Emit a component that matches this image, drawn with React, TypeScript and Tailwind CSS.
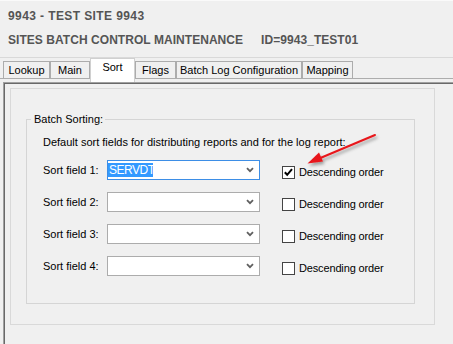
import React from "react";

const font = { fontFamily: '"Liberation Sans", Arial, sans-serif' };

function Chevron() {
  return (
    <svg width="8" height="6" viewBox="0 0 8 6" className="block">
      <path d="M1 1.2 L4 4.2 L7 1.2" fill="none" stroke="#606060" strokeWidth="1.8" />
    </svg>
  );
}

function Combo({ value, focused }: { value?: string; focused?: boolean }) {
  return (
    <div
      className={
        "relative h-[20px] w-[153px] bg-white border " +
        (focused ? "border-[#3d8ee6]" : "border-[#acacac]")
      }
    >
      {value ? (
        <div className="mt-[2px] h-[14px] w-[45px] bg-[#3399ff] text-white text-[12px] leading-[14px] tracking-[-0.5px] pl-[1px]">
          {value}
        </div>
      ) : null}
      <div className="absolute right-[5px] top-[6px]">
        <Chevron />
      </div>
    </div>
  );
}

function Checkbox({ checked }: { checked?: boolean }) {
  return (
    <div className="h-[13px] w-[13px] border border-[#444444] bg-white flex items-center justify-center">
      {checked ? (
        <svg width="11" height="11" viewBox="0 0 11 11" className="block">
          <path d="M1.8 5.2 L4.2 7.8 L9 2.2" fill="none" stroke="#000" strokeWidth="2" />
        </svg>
      ) : null}
    </div>
  );
}

function Row({ n, value, focused, checked }: { n: number; value?: string; focused?: boolean; checked?: boolean }) {
  return (
    <div className="flex items-start h-[20px]">
      <div className="w-[64px] text-[11px] leading-[20px] text-black">Sort field {n}:</div>
      <Combo value={value} focused={focused} />
      <div className="ml-[22px] mt-[2px] h-[20px] flex items-center">
        <Checkbox checked={checked} />
        <span className="ml-[4px] text-[11px] leading-[13px] text-black tracking-[-0.15px]">Descending order</span>
      </div>
    </div>
  );
}

const tabs = [
  { label: "Lookup", w: "w-[47px]" },
  { label: "Main", w: "w-[40px]" },
  { label: "Sort", w: "w-[45px]", selected: true },
  { label: "Flags", w: "w-[41px]" },
  { label: "Batch Log Configuration", w: "w-[126px]" },
  { label: "Mapping", w: "w-[51px]" },
];

export default function App() {
  return (
    <div className="relative w-[453px] h-[344px] overflow-hidden bg-[#f0f0f0]" style={font}>
      {/* Header */}
      <div className="h-[57px] pt-[7px] pl-[8px] text-[#555555] font-bold text-[12px] leading-[16px] border-t border-[#fafafa]">
        <div className="tracking-[0.4px]">9943 - TEST SITE 9943</div>
        <div className="mt-[8px] flex tracking-[0.05px]">
          <span>SITES BATCH CONTROL MAINTENANCE</span>
          <span className="ml-[18px]">ID=9943_TEST01</span>
        </div>
      </div>
      <div className="h-px bg-[#d9d9d9]" />

      {/* Tab strip */}
      <div className="flex items-end h-[21px] border-b border-[#adadad] pl-[3px]">
        {tabs.map((t) =>
          t.selected ? (
            <div
              key={t.label}
              className={
                t.w +
                " relative z-10 h-[24px] -mb-[4px] bg-white border-t border-l border-r border-[#d0d0d0] text-[11px] leading-[16px] text-black flex justify-center"
              }
            >
              {t.label}
            </div>
          ) : (
            <div
              key={t.label}
              className={
                t.w +
                " h-[17px] bg-[#f0f0f0] border-t border-l border-r border-[#acacac] text-[11px] leading-[16px] text-black flex justify-center"
              }
            >
              {t.label}
            </div>
          )
        )}
      </div>

      {/* Tab page */}
      <div className="mt-[3px] ml-[3px] border-t border-l border-[#a0a0a0] h-[270px]">
        <div className="border-t border-l border-[#696969] h-full">
          <div className="ml-[5px] mt-[4px] w-[425px] h-[237px] border border-[#d9d9d9]">
            <div className="relative ml-[15px] mt-[30px] w-[389px] h-[185px] border border-[#d5d5d5]">
              <span className="absolute left-[4px] -top-[7px] bg-[#f0f0f0] pl-[3px] pr-[2px] text-[11px] leading-[13px] text-black">
                Batch Sorting:
              </span>
              <div className="pl-[16px] pt-[16px]">
                <div className="text-[11px] leading-[13px] text-black">
                  Default sort fields for distributing reports and for the log report:
                </div>
                <div className="mt-[11px] flex flex-col gap-[12px]">
                  <Row n={1} value="SERVDT" focused checked />
                  <Row n={2} />
                  <Row n={3} />
                  <Row n={4} />
                </div>
              </div>
            </div>
          </div>
        </div>
      </div>

      {/* Red arrow annotation */}
      <svg className="absolute left-0 top-0 pointer-events-none" width="453" height="344" viewBox="0 0 453 344">
        <defs>
          <filter id="sh" x="-20%" y="-20%" width="140%" height="140%">
            <feDropShadow dx="1.5" dy="2.5" stdDeviation="1.5" floodColor="#000" floodOpacity="0.35" />
          </filter>
        </defs>
        <g filter="url(#sh)">
          <line x1="375" y1="135" x2="318" y2="159" stroke="#e8181c" strokeWidth="2" strokeLinecap="round" />
          <polygon points="307.5,163.5 323,161.5 319,152.5" fill="#e8181c" />
        </g>
      </svg>
    </div>
  );
}
